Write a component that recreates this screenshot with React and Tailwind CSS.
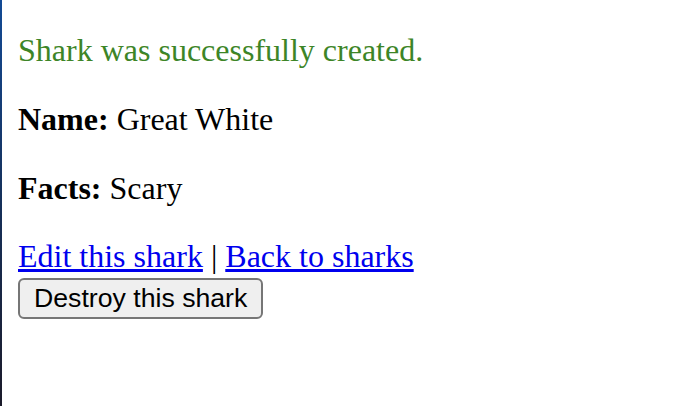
export default function App() {
  return (
    <div className="flex min-h-[406px] bg-white">
      <div className="w-[2px] shrink-0 bg-gradient-to-b from-[#124a95] via-[#15305a] to-[#1a1a2a]" />
      <div className="px-[16px] pt-[32px] font-['Liberation_Serif',serif] text-[32px] leading-[1.15] text-black">
        <p className="mb-[32px] text-[#3d8527]">Shark was successfully created.</p>
        <div>
          <p className="mb-[32px]">
            <strong className="font-bold">Name:</strong> Great White
          </p>
          <p className="mb-[32px]">
            <strong className="font-bold">Facts:</strong> Scary
          </p>
        </div>
        <div>
          <a href="#" className="text-[#0000ee] underline">
            Edit this shark
          </a>{' '}
          |{' '}
          <a href="#" className="text-[#0000ee] underline">
            Back to sharks
          </a>
          <form className="mt-[3px]" onSubmit={(e) => e.preventDefault()}>
            <button
              type="submit"
              className="rounded-[6px] border-2 border-[#767676] bg-[#efefef] px-[14px] py-[3px] font-['Liberation_Sans',Arial,sans-serif] text-[26.67px] leading-[31px] text-black"
            >
              Destroy this shark
            </button>
          </form>
        </div>
      </div>
    </div>
  );
}
